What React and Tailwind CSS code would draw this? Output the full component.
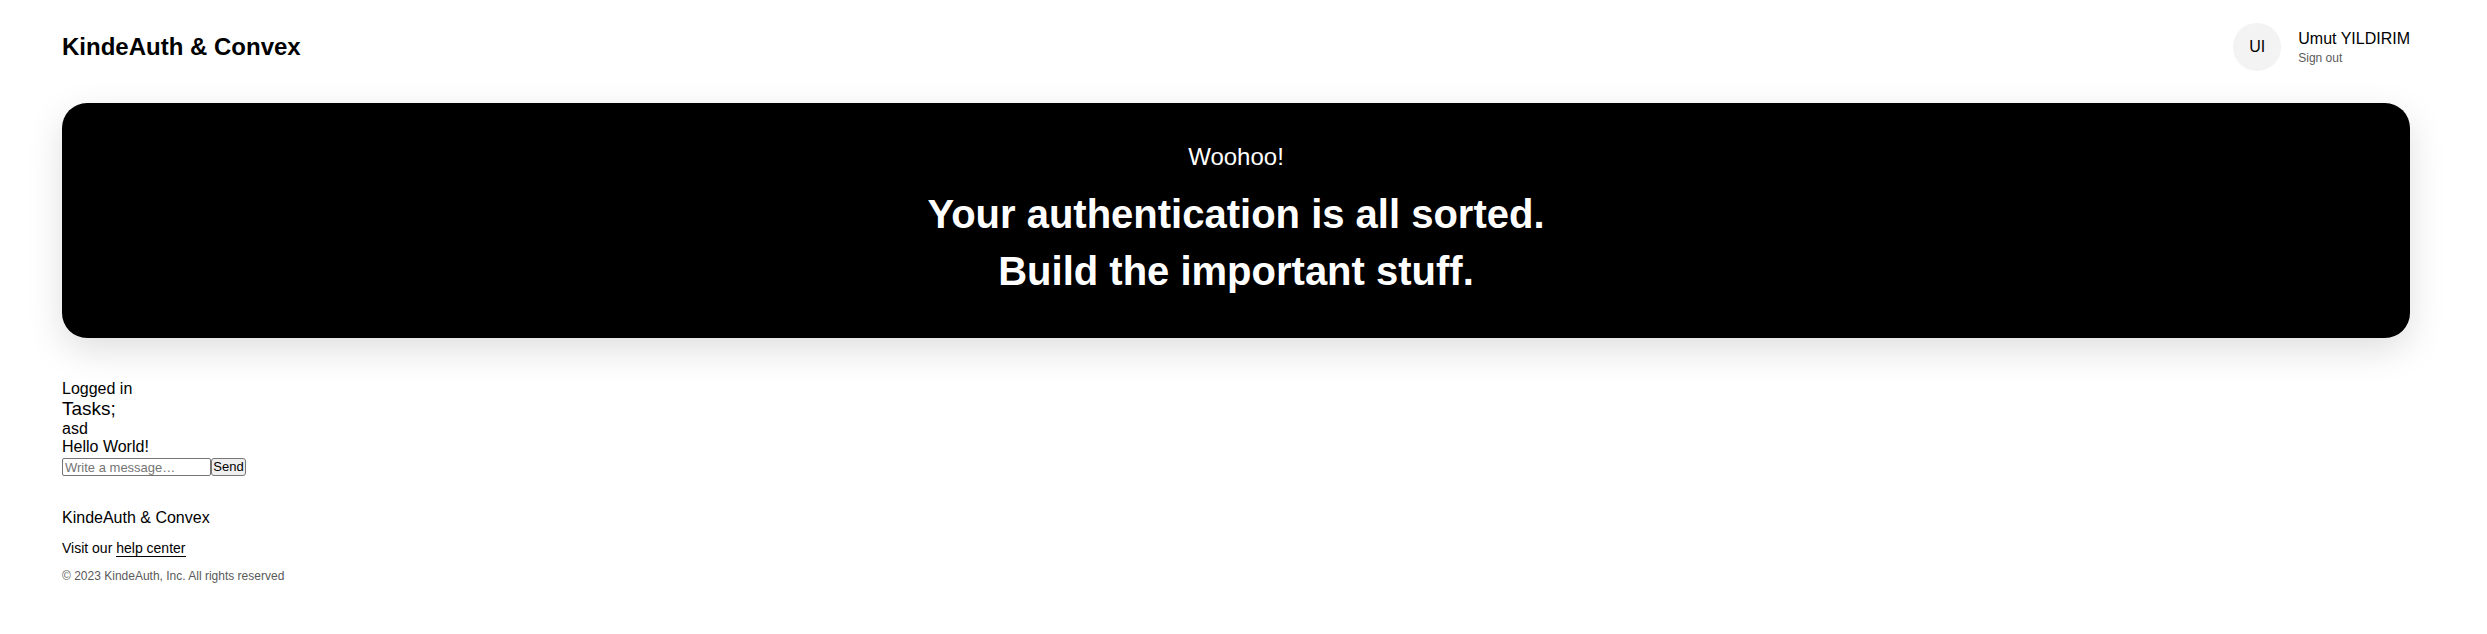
export default function App() {
  return (
    <div className="w-[2472px] min-h-[634px] bg-white px-[62px] text-black font-['Liberation_Sans',Arial,sans-serif]">
      <header className="flex h-[94px] items-center justify-between">
        <h1 className="text-[24px] font-bold leading-[28px]">KindeAuth &amp; Convex</h1>
        <div className="flex items-center gap-[17px]">
          <div className="flex h-[48px] w-[48px] items-center justify-center rounded-full bg-[#f3f3f3] text-[16px]">
            UI
          </div>
          <div className="flex flex-col">
            <p className="text-[16px] leading-[18px]">Umut YILDIRIM</p>
            <a className="mt-[3px] text-[12px] leading-[14px] text-[#5a5a5a]">Sign out</a>
          </div>
        </div>
      </header>

      <section className="mt-[9px] h-[235px] rounded-[25px] bg-black pt-[40px] pb-[38px] text-center text-white shadow-[0_12px_36px_rgba(0,0,0,0.13)]">
        <p className="text-[24px] leading-[28px]">Woohoo!</p>
        <h2 className="mt-[15px] text-[40px] font-bold leading-[57px]">
          Your authentication is all sorted.
          <br />
          Build the important stuff.
        </h2>
      </section>

      <main className="mt-[42px]">
        <p className="text-[16px] leading-[18px]">Logged in</p>
        <h3 className="text-[19px] leading-[22px]">Tasks;</h3>
        <p className="text-[16px] leading-[18px]">asd</p>
        <p className="text-[16px] leading-[18px]">Hello World!</p>
        <form className="mt-[2px] flex" onSubmit={(e) => e.preventDefault()}>
          <input
            className="h-[18px] w-[149px] rounded-[2px] border border-[#767676] px-[2px] text-[13px] leading-[16px] placeholder:text-[#757575]"
            placeholder="Write a message…"
          />
          <button className="h-[18px] w-[35px] rounded-[3px] border border-[#767676] bg-[#efefef] text-[13px] leading-[16px]">
            Send
          </button>
        </form>
      </main>

      <footer className="mt-[33px]">
        <p className="text-[16px] leading-[18px]">KindeAuth &amp; Convex</p>
        <p className="mt-[13px] text-[14px] leading-[16px]">
          Visit our <a className="border-b border-black">help center</a>
        </p>
        <small className="mt-[13px] block text-[12px] leading-[14px] text-[#5a5a5a]">
          © 2023 KindeAuth, Inc. All rights reserved
        </small>
      </footer>
    </div>
  );
}
